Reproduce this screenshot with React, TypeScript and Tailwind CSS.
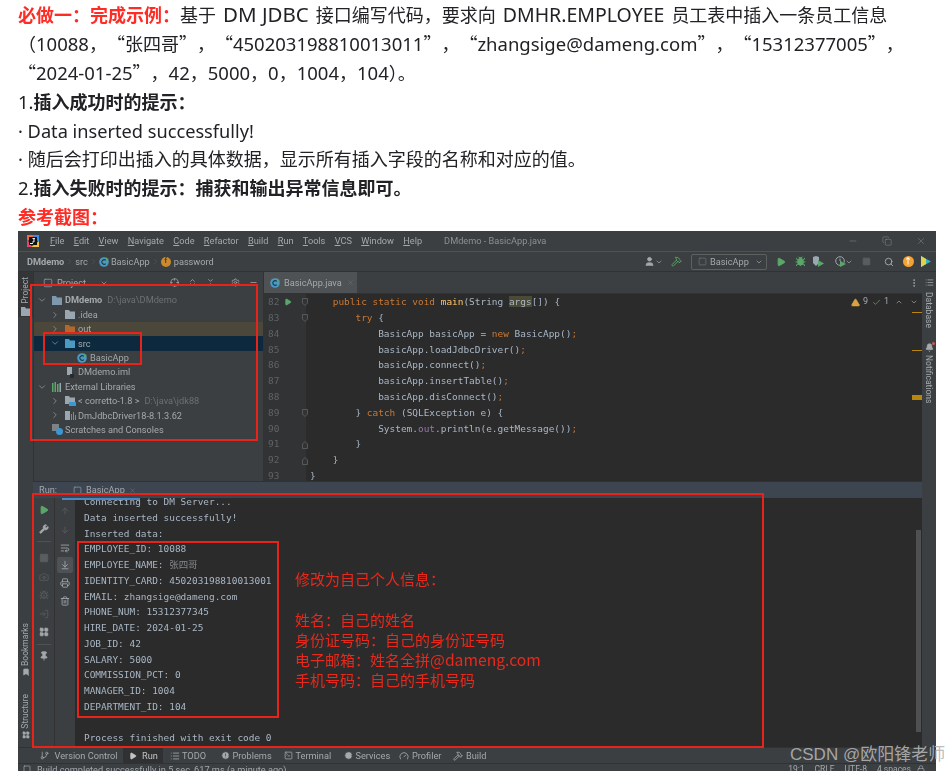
import {
  ArrowDown,
  ArrowDownToLine,
  ArrowUp,
  Bell,
  Bookmark,
  Bug,
  Camera,
  Check,
  ChevronDown,
  ChevronRight,
  ChevronUp,
  ChevronsDownUp,
  ChevronsUpDown,
  CircleAlert,
  CirclePlay,
  Copy,
  Crosshair,
  Gauge,
  GitBranch,
  Hammer,
  LayoutGrid,
  List,
  Lock,
  LogIn,
  Minus,
  MoreVertical,
  Pin,
  Play,
  Printer,
  Search,
  Settings,
  Square,
  SquareTerminal,
  Trash2,
  TriangleAlert,
  User,
  Wrench,
  WrapText,
  X,
} from "lucide-react";
import type { ReactNode } from "react";

const ui = "font-['Roboto','Noto_Sans_CJK_SC',sans-serif]";
const mono = "font-['DejaVu_Sans_Mono','Noto_Sans_CJK_SC',monospace]";

const comma = "\uFF0C";
const colon = "\uFF1A";

const Lat = ({ children }: { children: ReactNode }) => (
  <span className="font-['Noto_Sans',sans-serif] text-[18.5px]">{children}</span>
);
const Lq = () => <span className="inline-block w-[18px] text-right">{"\u201C"}</span>;
const Rq = () => <span className="inline-block w-[18px] text-left">{"\u201D"}</span>;

const Folder = ({ color = "#9aa7b0" }: { color?: string }) => (
  <svg width="10" height="9" viewBox="0 0 10 9" className="shrink-0">
    <path d="M0 0h4l1 1.5h5V9H0z" fill={color} />
  </svg>
);

const ClassIcon = () => (
  <svg width="10" height="10" viewBox="0 0 10 10" className="shrink-0">
    <circle cx="5" cy="5" r="4.8" fill="#4a9ac4" />
    <path d="M6.8 3.4A2.3 2.3 0 1 0 6.8 6.6" fill="none" stroke="#1e3a4a" strokeWidth="1.2" />
    <path d="M7 0l1 1.5L10 2 8.5 3 8 4.5 7 3z" fill="#59a869" />
  </svg>
);

const FileIcon = () => (
  <svg width="10" height="11" viewBox="0 0 10 11" className="shrink-0">
    <path d="M2 0h5v8H2z" fill="#9aa7b0" />
    <path d="M5 7h4v4H5z" fill="#2b2b2b" />
  </svg>
);

const LibIcon = () => (
  <svg width="10" height="10" viewBox="0 0 10 10" className="shrink-0">
    <path d="M0 1h1.5v9H0zM2.5 0H4v10H2.5zM5 2h1.5v8H5z" fill="#59a869" />
    <path d="M7.5 1H9v9H7.5z" fill="#9aa7b0" />
  </svg>
);

const ScratchIcon = () => (
  <svg width="11" height="11" viewBox="0 0 11 11" className="shrink-0">
    <path d="M0 0h7v7H0z" fill="#7d8285" />
    <circle cx="7.5" cy="7.5" r="3.5" fill="#3b97d3" />
  </svg>
);

const JdkIcon = () => (
  <svg width="11" height="10" viewBox="0 0 11 10" className="shrink-0">
    <path d="M0 0h4l1 1.5h5V8H0z" fill="#9aa7b0" />
    <path d="M4 6h7v4H4z" fill="#3b97d3" />
  </svg>
);

const DriverIcon = () => (
  <svg width="11" height="9" viewBox="0 0 11 9" className="shrink-0">
    <path d="M0 0h5v9H0z" fill="#9aa7b0" />
    <path d="M6 3h1v6H6zM8 1h1v8H8zM10 4h1v5h-1z" fill="#59a869" />
  </svg>
);

const CoverageIcon = () => (
  <svg width="11" height="11" viewBox="0 0 11 11" className="shrink-0">
    <path d="M0 1l3-1 3 1v6l-3 3-3-3z" fill="#9aa7b0" />
    <path d="M5 4l6 3.5L5 11z" fill="#59a869" />
  </svg>
);

const ProfileIcon = () => (
  <svg width="11" height="11" viewBox="0 0 11 11" className="shrink-0">
    <circle cx="5" cy="5" r="4.3" fill="none" stroke="#9aa7b0" />
    <path d="M5 2.5V5l1.5 1" fill="none" stroke="#9aa7b0" />
    <path d="M5 5l6 3-6 3z" fill="#59a869" />
  </svg>
);

const IdeaLogo = () => (
  <svg width="12" height="12" viewBox="0 0 12 12" className="mr-[11px] shrink-0">
    <path d="M0 0h7L4 6 0 5z" fill="#f26a3d" />
    <path d="M5 0h7v7L8 4z" fill="#3d8be8" />
    <path d="M0 4l5 8H0z" fill="#e8447a" />
    <path d="M4 12l8-6v6z" fill="#f5c23e" />
    <path d="M2 2h8v8H2z" fill="#111" />
    <path d="M3 8h3v1H3zM5.5 3h2.5v1H7.5v2.8L6.6 7.5H5.2V6.6h1.2V4H5.5z" fill="#eee" />
  </svg>
);

const FoldMark = ({ className }: { className: string }) => (
  <svg width="6" height="8" viewBox="0 0 6 8" className={`absolute left-[38px] ${className}`}>
    <path d="M.5.5h5v4.5L3 7.5.5 5z" fill="#313335" stroke="#606366" strokeWidth=".8" />
  </svg>
);

const Underlined = ({ text }: { text: string }) => (
  <span>
    <span className="underline">{text[0]}</span>
    {text.slice(1)}
  </span>
);

const menu = ["File", "Edit", "View", "Navigate", "Code", "Refactor", "Build", "Run", "Tools", "VCS", "Window", "Help"];

const tree = [
  { pad: "pl-[3px]", arrow: "down", icon: <Folder color="#7f98ad" />, label: "DMdemo", bold: true, dim: "D:\\java\\DMdemo" },
  { pad: "pl-[16px]", arrow: "right", icon: <Folder />, label: ".idea" },
  { pad: "pl-[16px]", arrow: "right", icon: <Folder color="#b5662e" />, label: "out", bg: "bg-[#4b473a]" },
  { pad: "pl-[16px]", arrow: "down", icon: <Folder color="#4a9ac4" />, label: "src", bg: "bg-[#0d293e]" },
  { pad: "pl-[28px]", icon: <ClassIcon />, label: "BasicApp" },
  { pad: "pl-[16px]", icon: <FileIcon />, label: "DMdemo.iml" },
  { pad: "pl-[3px]", arrow: "down", icon: <LibIcon />, label: "External Libraries" },
  { pad: "pl-[16px]", arrow: "right", icon: <JdkIcon />, label: "< corretto-1.8 >", dim: "D:\\java\\jdk88" },
  { pad: "pl-[16px]", arrow: "right", icon: <DriverIcon />, label: "DmJdbcDriver18-8.1.3.62" },
  { pad: "pl-[3px]", icon: <ScratchIcon />, label: "Scratches and Consoles" },
];

const K = ({ children }: { children: string }) => <span className="text-[#cc7832]">{children}</span>;

const codeLines = [
  <>
    {"    "}
    <K>public static void</K> <span className="text-[#ffc66d]">main</span>(String{" "}
    <span className="bg-[#4b4b35]">args</span>[]) {"{"}
  </>,
  <>
    {"        "}
    <K>try</K> {"{"}
  </>,
  <>
    {"            "}BasicApp basicApp = <K>new</K> BasicApp()<K>;</K>
  </>,
  <>
    {"            "}basicApp.loadJdbcDriver()<K>;</K>
  </>,
  <>
    {"            "}basicApp.connect()<K>;</K>
  </>,
  <>
    {"            "}basicApp.insertTable()<K>;</K>
  </>,
  <>
    {"            "}basicApp.disConnect()<K>;</K>
  </>,
  <>
    {"        "}
    {"} "}
    <K>catch</K> (SQLException e) {"{"}
  </>,
  <>
    {"            "}System.<span className="text-[#9876aa]">out</span>.println(e.getMessage())<K>;</K>
  </>,
  <>{"        }"}</>,
  <>{"    }"}</>,
  <>{"}"}</>,
];

const consoleLines: ReactNode[] = [
  "Connecting to DM Server...",
  "Data inserted successfully!",
  "Inserted data:",
  "EMPLOYEE_ID: 10088",
  <>
    EMPLOYEE_NAME: <span className="text-[#85898c]">张四哥</span>
  </>,
  "IDENTITY_CARD: 450203198810013001",
  "EMAIL: zhangsige@dameng.com",
  "PHONE_NUM: 15312377345",
  "HIRE_DATE: 2024-01-25",
  "JOB_ID: 42",
  "SALARY: 5000",
  "COMMISSION_PCT: 0",
  "MANAGER_ID: 1004",
  "DEPARTMENT_ID: 104",
  "",
  "Process finished with exit code 0",
];

const bottomTools = [
  { icon: <GitBranch size={9} />, label: "Version Control", cls: "w-[83.5px] gap-[6px]" },
  { icon: <Play size={8} fill="currentColor" />, label: "Run", cls: "w-[40px] gap-[5px] pl-[6px] bg-[#2f3133] text-[#c4c4c4]" },
  { icon: <List size={10} />, label: "TODO", cls: "w-[57.5px] gap-[2px] pl-[7px]" },
  { icon: <CircleAlert size={9} fill="currentColor" stroke="#3c3f41" />, label: "Problems", cls: "w-[63px] gap-[3px]" },
  { icon: <SquareTerminal size={9} />, label: "Terminal", cls: "w-[60px] gap-[3px]" },
  { icon: <CirclePlay size={9} fill="currentColor" stroke="#3c3f41" />, label: "Services", cls: "w-[55.5px] gap-[3px]" },
  { icon: <Gauge size={10} />, label: "Profiler", cls: "w-[54px] gap-[3px]" },
  { icon: <Hammer size={10} />, label: "Build", cls: "w-[40px] gap-[3px]" },
];

export default function App() {
  return (
    <div className="relative h-[771px] w-[949px] overflow-hidden bg-white">
      <div className="pl-[18px] font-['Noto_Sans_CJK_SC',sans-serif] text-[18px] leading-[28.9px] text-[#222226] whitespace-nowrap blur-[0.25px]">
        <p className="h-[28.9px]">
          <strong className="text-[#fe2c24]">必做一{colon}完成示例{colon}</strong>基于
          <span className="mx-[7px] font-['Noto_Sans',sans-serif] text-[20.5px]">DM JDBC</span>
          接口编写代码{comma}要求向
          <span className="mx-[7px] font-['Noto_Sans',sans-serif] text-[19.5px]">DMHR.EMPLOYEE</span>
          员工表中插入一条员工信息
        </p>
        <p className="h-[28.9px]">
          {"\uFF08"}
          <Lat>10088</Lat>
          {comma}
          <Lq />
          张四哥
          <Rq />
          {comma}
          <Lq />
          <Lat>450203198810013011</Lat>
          <Rq />
          {comma}
          <Lq />
          <Lat>zhangsige@dameng.com</Lat>
          <Rq />
          {comma}
          <Lq />
          <Lat>15312377005</Lat>
          <Rq />
          {comma}
        </p>
        <p className="h-[28.9px]">
          <Lq />
          <Lat>2024-01-25</Lat>
          <Rq />
          {comma}
          <Lat>42</Lat>
          {comma}
          <Lat>5000</Lat>
          {comma}
          <Lat>0</Lat>
          {comma}
          <Lat>1004</Lat>
          {comma}
          <Lat>104</Lat>
          {"\uFF09\u3002"}
        </p>
        <p className="h-[28.9px]">
          <Lat>1.</Lat>
          <strong>插入成功时的提示{colon}</strong>
        </p>
        <p className="h-[28.9px]">
          <span className="font-['Noto_Sans',sans-serif] text-[18.2px]">· Data inserted successfully!</span>
        </p>
        <p className="h-[28.9px]">
          <Lat>· </Lat>随后会打印出插入的具体数据{comma}显示所有插入字段的名称和对应的值。
        </p>
        <p className="h-[28.9px]">
          <Lat>2.</Lat>
          <strong>插入失败时的提示{colon}捕获和输出异常信息即可。</strong>
        </p>
        <p className="h-[28.9px]">
          <strong className="text-[#fe2c24]">参考截图{colon}</strong>
        </p>
      </div>

      <div className={`relative ml-[18px] flex h-[540px] w-[918px] flex-col overflow-hidden bg-[#3c3f41] text-[9.2px] text-[#a4a9ad] blur-[0.35px] ${ui}`}>
        {/* title bar */}
        <div className="relative flex h-[21px] shrink-0 items-center border-b border-[#515151] pl-[9px]">
          <IdeaLogo />
          <div className="flex gap-[9.3px]">
            {menu.map((m) => (
              <Underlined key={m} text={m} />
            ))}
          </div>
          <span className="ml-[22px] text-[#8c9094]">DMdemo - BasicApp.java</span>
          <div className="ml-auto flex items-center gap-[24px] pr-[10px] text-[#9a9da0]">
            <Minus size={10} strokeWidth={1} />
            <Copy size={10} strokeWidth={1} />
            <X size={10} strokeWidth={1} />
          </div>
        </div>

        {/* navigation bar */}
        <div className="flex h-[20px] shrink-0 items-center border-b border-[#323232] pl-[9px]">
          <span className="font-bold">DMdemo</span>
          <ChevronRight size={9} strokeWidth={1} className="mx-[1px] text-[#666]" />
          <span>src</span>
          <ChevronRight size={9} strokeWidth={1} className="mx-[1px] text-[#666]" />
          <ClassIcon />
          <span className="ml-[2px]">BasicApp</span>
          <ChevronRight size={9} strokeWidth={1} className="mx-[1px] text-[#666]" />
          <span className="flex h-[10px] w-[10px] items-center justify-center rounded-full bg-[#c88a2c] text-[7px] font-bold leading-none text-[#3c3f41]">
            f
          </span>
          <span className="ml-[3px]">password</span>
          <div className="ml-auto flex items-center pr-[5px]">
            <User size={11} fill="currentColor" />
            <ChevronDown size={8} className="mr-[8px]" />
            <Hammer size={11} className="mr-[9px] text-[#59a869]" />
            <div className="mr-[9px] flex h-[16px] w-[76px] items-center gap-[3px] rounded-[2px] border border-[#5e6060] pl-[6px]">
              <Square size={9} className="text-[#6c7072]" />
              <span>BasicApp</span>
              <ChevronDown size={8} className="ml-auto mr-[3px]" />
            </div>
            <Play size={10} fill="#59a869" className="mr-[8.5px] text-[#59a869]" />
            <Bug size={11} fill="#59a869" className="mr-[7.5px] text-[#59a869]" />
            <span className="mr-[11px]">
              <CoverageIcon />
            </span>
            <ProfileIcon />
            <ChevronDown size={8} className="ml-[-1px] mr-[8.5px]" />
            <Square size={9} fill="#5a5d5f" className="mr-[13.5px] text-[#5a5d5f]" />
            <Search size={10} className="mr-[8.5px] text-[#b0b3b5]" />
            <span className="mr-[7.5px] flex h-[11px] w-[11px] items-center justify-center rounded-full bg-[#f3a233] text-[8px] font-bold leading-none text-white">
              ↑
            </span>
            <svg width="10" height="11" viewBox="0 0 10 11">
              <path d="M0 0l10 5.5L0 11z" fill="#2fb7c9" />
              <path d="M0 0l5 3v5l-5 3z" fill="#e4d34a" />
            </svg>
          </div>
        </div>

        <div className="flex h-[475px] shrink-0">
          {/* left strip */}
          <div className="flex w-[15px] shrink-0 flex-col items-center text-[8.5px] text-[#a4a9ad]">
            <div className="flex h-[45px] w-full flex-col items-center gap-[3px] bg-[#333537] pt-[5px]">
              <span className="rotate-180 leading-none [writing-mode:vertical-rl]">Project</span>
              <Folder />
            </div>
            <div className="mt-auto flex flex-col items-center pb-[8px]">
              <span className="rotate-180 leading-none [writing-mode:vertical-rl]">Bookmarks</span>
              <Bookmark size={8} fill="currentColor" className="mt-[2px]" />
              <span className="mt-[18px] rotate-180 leading-none [writing-mode:vertical-rl]">Structure</span>
              <LayoutGrid size={8} fill="currentColor" className="mt-[3px]" />
            </div>
          </div>

          {/* centre */}
          <div className="flex min-w-0 flex-1 flex-col">
            <div className="flex h-[209px] shrink-0">
              {/* project panel */}
              <div className="w-[230px] shrink-0 overflow-hidden border-l border-[#323232]">
                <div className="flex h-[21px] items-center pl-[9px] pr-[5px]">
                  <Square size={10} className="mr-[4px] text-[#7f98ad]" />
                  <span>Project</span>
                  <ChevronDown size={8} className="ml-[14px]" />
                  <div className="ml-auto flex items-center gap-[9px]">
                    <Crosshair size={9} />
                    <ChevronsUpDown size={9} />
                    <ChevronsDownUp size={9} />
                    <Settings size={9} className="ml-[7px]" />
                    <Minus size={9} />
                  </div>
                </div>
                {tree.map((row) => (
                  <div key={row.label} className={`flex h-[14.4px] items-center whitespace-nowrap ${row.pad} ${row.bg ?? ""}`}>
                    <span className="flex w-[15px] shrink-0 items-center">
                      {row.arrow === "down" && <ChevronDown size={10} strokeWidth={1.5} />}
                      {row.arrow === "right" && <ChevronRight size={10} strokeWidth={1.5} />}
                    </span>
                    <span className="flex w-[13px] shrink-0 items-center">{row.icon}</span>
                    <span className={row.bold ? "font-bold" : ""}>{row.label}</span>
                    {row.dim && <span className="ml-[5px] text-[#6d7072]">{row.dim}</span>}
                  </div>
                ))}
              </div>

              {/* editor */}
              <div className="flex min-w-0 flex-1 flex-col border-l border-[#323232]">
                <div className="flex h-[22px] shrink-0 items-center border-b border-[#323232]">
                  <div className="flex h-full w-[93px] items-center bg-[#4e5254] pl-[6px] text-[#a4a9ad]">
                    <ClassIcon />
                    <span className="ml-[4px]">BasicApp.java</span>
                    <X size={7} className="ml-[5px] text-[#6d7072]" />
                  </div>
                  <MoreVertical size={10} className="ml-auto mr-[3px]" />
                </div>
                <div className={`flex min-h-0 flex-1 overflow-hidden bg-[#2b2b2b] text-[9.45px] ${mono}`}>
                  <div className="relative w-[42px] shrink-0 bg-[#313335] pl-[4px] text-[#606366]">
                    {codeLines.map((_, i) => (
                      <div key={i} className="h-[15.8px] leading-[15.8px]">
                        {82 + i}
                      </div>
                    ))}
                    <Play size={8} fill="#59a869" className="absolute left-[20px] top-[4px] text-[#59a869]" />
                    <FoldMark className="top-[4px]" />
                    <FoldMark className="top-[20px]" />
                    <FoldMark className="top-[115px]" />
                    <FoldMark className="top-[147px] rotate-180" />
                    <FoldMark className="top-[163px] rotate-180" />
                  </div>
                  <div className="min-w-0 flex-1 whitespace-pre pl-[4px] text-[#a9b7c6]">
                    {codeLines.map((line, i) => (
                      <div key={i} className="h-[15.8px] leading-[15.8px]">
                        {line}
                      </div>
                    ))}
                  </div>
                  <div className="w-[80px] shrink-0 pl-[9px]">
                    <div className={`flex h-[15.8px] items-center text-[9px] text-[#a4a9ad] ${ui}`}>
                      <TriangleAlert size={9} fill="#d9a343" className="text-[#d9a343]" />
                      <span className="ml-[3px]">9</span>
                      <Check size={9} className="ml-[4px] text-[#59a869]" />
                      <span className="ml-[3px]">1</span>
                      <ChevronUp size={8} className="ml-[6px]" />
                      <ChevronDown size={8} className="ml-[7px]" />
                    </div>
                    <div className="ml-auto mt-[2px] h-[1px] w-[10px] bg-[#b8860b]" />
                    <div className="ml-auto mt-[37px] h-[1px] w-[10px] bg-[#b8860b]" />
                    <div className="ml-auto mt-[44px] h-[5px] w-[10px] bg-[#b8860b]" />
                  </div>
                </div>
              </div>
            </div>

            {/* run tool window */}
            <div className="flex h-[17px] shrink-0 items-center border-t border-[#323232] bg-[#3d4650] pl-[6px]">
              <span>Run:</span>
              <Square size={9} className="ml-[16px] text-[#7f98ad]" />
              <span className="ml-[4px]">BasicApp</span>
              <X size={7} className="ml-[4px] text-[#6d7072]" />
            </div>
            <div className="relative flex h-[249px] shrink-0 bg-[#2b2b2b]">
              <div className="absolute left-[29px] top-0 h-[2px] w-[78px] bg-[#4a88c7]" />
              <div className="flex w-[21px] shrink-0 flex-col items-center bg-[#3c3f41] pt-[3px] text-[#a4a9ad] [&>svg]:my-[4.25px]">
                <Play size={10} fill="#59a869" className="text-[#59a869]" />
                <Wrench size={10} fill="currentColor" />
                <div className="mb-[7px] mt-[3px] h-[1px] w-[14px] shrink-0 bg-[#515151]" />
                <Square size={10} fill="#5a5d5f" className="text-[#5a5d5f]" />
                <Camera size={10} className="text-[#5a5d5f]" />
                <Bug size={10} className="text-[#5a5d5f]" />
                <LogIn size={10} className="text-[#5a5d5f]" />
                <LayoutGrid size={10} fill="currentColor" className="mt-[10px]" />
                <div className="my-[2px] h-[1px] w-[14px] shrink-0 bg-[#515151]" />
                <Pin size={10} fill="currentColor" />
              </div>
              <div className="flex w-[21px] shrink-0 flex-col items-center border-l border-[#323232] bg-[#3c3f41] pt-[8px] text-[#a4a9ad]">
                <ArrowUp size={10} className="text-[#5a5d5f]" />
                <ArrowDown size={10} className="mt-[8.4px] text-[#5a5d5f]" />
                <WrapText size={10} className="mt-[8.4px]" />
                <span className="mt-[4px] flex h-[16px] w-[16px] items-center justify-center rounded-[2px] bg-[#4e5254]">
                  <ArrowDownToLine size={10} />
                </span>
                <Printer size={10} className="mt-[5px]" />
                <Trash2 size={10} className="mt-[8.4px]" />
              </div>
              <div className={`min-w-0 flex-1 overflow-hidden pl-[9px] text-[9.45px] text-[#a9b7c6] ${mono}`}>
                <div className="-mt-[4px]">
                  {consoleLines.map((line, i) => (
                    <div key={i} className="h-[15.75px] whitespace-pre leading-[15.75px]">
                      {line}
                    </div>
                  ))}
                </div>
              </div>
              <div className="mr-[1px] mt-[32px] h-[202px] w-[5px] shrink-0 bg-[#4e5052]" />
            </div>
          </div>

          {/* right strip */}
          <div className="flex w-[14px] shrink-0 flex-col items-center pt-[6px] text-[8.5px] text-[#a4a9ad]">
            <List size={9} />
            <span className="mt-[5px] leading-none [writing-mode:vertical-rl]">Database</span>
            <span className="relative mt-[15px]">
              <Bell size={9} fill="currentColor" />
              <span className="absolute -right-[1px] -top-[1px] h-[3px] w-[3px] rounded-full bg-[#d9534f]" />
            </span>
            <span className="mt-[3px] leading-none [writing-mode:vertical-rl]">Notifications</span>
          </div>
        </div>

        {/* tool buttons */}
        <div className="flex h-[16px] shrink-0 items-center border-t border-[#323232] pl-[21.5px]">
          {bottomTools.map((t) => (
            <div key={t.label} className={`flex h-full shrink-0 items-center whitespace-nowrap ${t.cls}`}>
              {t.icon}
              <span>{t.label}</span>
            </div>
          ))}
        </div>

        {/* status bar */}
        <div className="flex h-[14px] shrink-0 items-start border-t border-[#323232] pl-[5px] leading-[11px]">
          <Square size={8} className="mt-[1px]" />
          <span className="ml-[6px]">Build completed successfully in 5 sec, 617 ms (a minute ago)</span>
          <div className="ml-auto flex gap-[10px] text-[8.5px]">
            <span>19:1</span>
            <span>CRLF</span>
            <span>UTF-8</span>
            <span>4 spaces</span>
          </div>
          <Lock size={8} className="ml-[6px] mr-[11px] mt-[1px]" />
        </div>

        {/* red annotations drawn over the screenshot */}
        <div className="absolute left-[12px] top-[53px] h-[157px] w-[228px] border-2 border-[#e8231a]" />
        <div className="absolute left-[25px] top-[101px] h-[33px] w-[99px] border-2 border-[#e8231a]" />
        <div className="absolute left-[14px] top-[262px] h-[255px] w-[732px] border-2 border-[#e8231a]" />
        <div className="absolute left-[59px] top-[310px] h-[177px] w-[202px] border-2 border-[#e8231a]" />
        <div className="absolute left-[277px] top-[338px] font-['Noto_Sans_CJK_SC',sans-serif] text-[15px] leading-[20.2px] text-[#e8291c]">
          <p>修改为自己个人信息{colon}</p>
          <p className="h-[20.2px]" />
          <p>姓名{colon}自己的姓名</p>
          <p>身份证号码{colon}自己的身份证号码</p>
          <p>
            电子邮箱{colon}姓名全拼<span className="text-[15.7px]">@dameng.com</span>
          </p>
          <p>手机号码{colon}自己的手机号码</p>
        </div>
      </div>

      {/* csdn watermark */}
      <div className="absolute left-[790px] top-[743px] whitespace-nowrap font-['Liberation_Sans','Noto_Sans_CJK_SC',sans-serif] text-[17px] leading-[24px] text-[#b4b4b4]/90">
        CSDN @欧阳锋老师
      </div>
    </div>
  );
}
